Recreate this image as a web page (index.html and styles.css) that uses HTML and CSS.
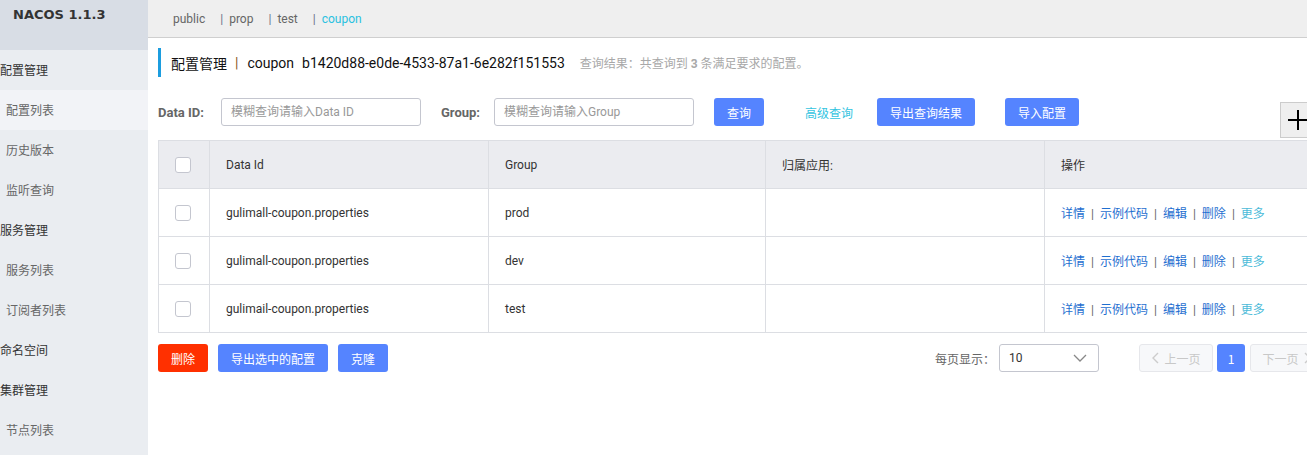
FILE: index.html
```html
<!DOCTYPE html>
<html lang="zh-CN">
<head>
<meta charset="utf-8">
<title>Nacos 配置管理</title>
<link rel="stylesheet" href="styles.css">
</head>
<body>
<div class="app">
  <aside class="sidebar">
    <div class="brand">NACOS 1.1.3</div>
    <ul class="menu">
      <li class="menu-group">配置管理</li>
      <li class="menu-item active">配置列表</li>
      <li class="menu-item">历史版本</li>
      <li class="menu-item">监听查询</li>
      <li class="menu-group">服务管理</li>
      <li class="menu-item">服务列表</li>
      <li class="menu-item">订阅者列表</li>
      <li class="menu-group">命名空间</li>
      <li class="menu-group">集群管理</li>
      <li class="menu-item">节点列表</li>
    </ul>
  </aside>
  <main class="main">
    <div class="ns-bar">
      <span class="ns">public</span>
      <span class="ns"><span class="ns-sep">|</span>prop</span>
      <span class="ns"><span class="ns-sep">|</span>test</span>
      <span class="ns ns-active"><span class="ns-sep">|</span>coupon</span>
    </div>
    <div class="content">
      <div class="title">
        <span class="title-main">配置管理</span>
        <span class="title-sep">|</span>
        <span class="title-main">coupon</span>
        <span class="title-main title-id">b1420d88-e0de-4533-87a1-6e282f151553</span>
        <span class="title-result">查询结果：共查询到 <b>3</b> 条满足要求的配置。</span>
      </div>
      <div class="search">
        <label class="lbl">Data ID:</label>
        <div class="input">模糊查询请输入Data ID</div>
        <label class="lbl lbl-group">Group:</label>
        <div class="input">模糊查询请输入Group</div>
        <button class="btn btn-query">查询</button>
        <span class="adv">高级查询</span>
        <button class="btn btn-export">导出查询结果</button>
        <button class="btn btn-import">导入配置</button>
      </div>
      <table class="grid">
        <colgroup>
          <col class="c-chk"><col class="c-id"><col class="c-group"><col class="c-app"><col class="c-op">
        </colgroup>
        <thead>
          <tr>
            <th class="chk-cell"><span class="chk"></span></th>
            <th>Data Id</th>
            <th>Group</th>
            <th>归属应用:</th>
            <th>操作</th>
          </tr>
        </thead>
        <tbody>
          <tr>
            <td class="chk-cell"><span class="chk"></span></td>
            <td>gulimall-coupon.properties</td>
            <td>prod</td>
            <td></td>
            <td class="ops"><a>详情</a><span class="sep">|</span><a>示例代码</a><span class="sep">|</span><a>编辑</a><span class="sep">|</span><a>删除</a><span class="sep">|</span><a class="more">更多</a></td>
          </tr>
          <tr>
            <td class="chk-cell"><span class="chk"></span></td>
            <td>gulimall-coupon.properties</td>
            <td>dev</td>
            <td></td>
            <td class="ops"><a>详情</a><span class="sep">|</span><a>示例代码</a><span class="sep">|</span><a>编辑</a><span class="sep">|</span><a>删除</a><span class="sep">|</span><a class="more">更多</a></td>
          </tr>
          <tr>
            <td class="chk-cell"><span class="chk"></span></td>
            <td>gulimail-coupon.properties</td>
            <td>test</td>
            <td></td>
            <td class="ops"><a>详情</a><span class="sep">|</span><a>示例代码</a><span class="sep">|</span><a>编辑</a><span class="sep">|</span><a>删除</a><span class="sep">|</span><a class="more">更多</a></td>
          </tr>
        </tbody>
      </table>
      <div class="footer">
        <div class="batch">
          <button class="btn btn-del">删除</button>
          <button class="btn btn-expsel">导出选中的配置</button>
          <button class="btn btn-clone">克隆</button>
        </div>
        <div class="pager">
          <span class="pager-lbl">每页显示：</span>
          <div class="select"><span>10</span>
            <svg class="chev" width="14" height="8" viewBox="0 0 14 8"><path d="M1 1 L7 7 L13 1" fill="none" stroke="#888" stroke-width="1.3"/></svg>
          </div>
          <button class="pg pg-prev"><svg width="8" height="12" viewBox="0 0 8 12"><path d="M7 1 L2 6 L7 11" fill="none" stroke="#ccc" stroke-width="1.4"/></svg>上一页</button>
          <button class="pg pg-cur">1</button>
          <button class="pg pg-next">下一页<svg width="8" height="12" viewBox="0 0 8 12"><path d="M1 1 L6 6 L1 11" fill="none" stroke="#ccc" stroke-width="1.4"/></svg></button>
        </div>
      </div>
    </div>
    <div class="add-box"><svg width="22" height="22" viewBox="0 0 22 22"><path d="M11 1 V21 M1 11 H21" stroke="#000" stroke-width="2"/></svg></div>
  </main>
</div>
</body>
</html>
```

FILE: styles.css
```css
* { box-sizing: border-box; }
html, body {
  margin: 0;
  padding: 0;
  width: 1307px;
  height: 455px;
  overflow: hidden;
  background: #fff;
  font-family: Roboto, "Noto Sans CJK SC", sans-serif;
  font-size: 12px;
  color: #333;
}
.app {
  display: flex;
  height: 455px;
}
.sidebar {
  width: 148px;
  flex: none;
  background: #eaedf1;
  overflow: hidden;
}
.brand {
  height: 50px;
  background: #d8dde5;
  padding: 7px 0 0 13px;
  font-family: "DejaVu Sans", sans-serif;
  font-weight: bold;
  font-size: 13px;
  color: #333;
}
.menu {
  list-style: none;
  margin: 0;
  padding: 0;
}
.menu li {
  height: 40px;
  line-height: 40px;
  white-space: nowrap;
  font-family: "Noto Sans CJK SC", sans-serif;
  font-size: 12px;
}
.menu-group {
  padding-left: 0;
  color: #333;
}
.menu-item {
  padding-left: 6px;
  color: #666;
}
.menu-item.active {
  background: #f2f3f7;
}
.main {
  flex: 1;
  min-width: 0;
  position: relative;
  overflow: hidden;
}
.ns-bar {
  height: 38px;
  background: #efefef;
  border-bottom: 1px solid #cfcfcf;
  padding-left: 25px;
  display: flex;
  align-items: center;
  white-space: nowrap;
  font-size: 12px;
  color: #666;
}
.ns { margin-right: 15px; }
.ns-sep { margin-right: 6px; color: #6a6f8a; }
.ns-active { color: #2ac1e0; }
.content {
  padding-left: 10px;
}
.title {
  margin-top: 10px;
  height: 29px;
  border-left: 3px solid #1c9ddf;
  padding-left: 10px;
  display: flex;
  align-items: center;
  white-space: nowrap;
}
.title-main {
  font-size: 14px;
  color: #111;
}
.title-sep {
  font-size: 14px;
  color: #8b5a1e;
  margin: 0 9px 0 8px;
}
.title-id { margin-left: 8px; }
.title-result {
  margin-left: 15px;
  font-size: 12px;
  color: #a8a8a8;
}
.title-result b { font-weight: bold; }
.search {
  margin-top: 21px;
  height: 28px;
  display: flex;
  align-items: center;
  white-space: nowrap;
}
.lbl {
  font-weight: bold;
  font-size: 13px;
  color: #666;
  width: 63px;
}
.lbl-group { margin-left: 20px; width: 53px; }
.input {
  width: 200px;
  height: 28px;
  border: 1px solid #c4c6cf;
  border-radius: 3px;
  padding-left: 9px;
  line-height: 26px;
  color: #999;
  font-size: 12px;
}
.btn {
  height: 28px;
  border: none;
  border-radius: 3px;
  background: #5584ff;
  color: #fff;
  font-family: "Noto Sans CJK SC", sans-serif;
  font-size: 12px;
  padding: 0;
  cursor: pointer;
}
.btn-query { width: 50px; margin-left: 20px; }
.adv {
  color: #33c4df;
  font-family: "Noto Sans CJK SC", sans-serif;
  margin-left: 41px;
  width: 72px;
}
.btn-export { width: 98px; }
.btn-import { width: 74px; margin-left: 30px; }
.grid {
  margin-top: 14px;
  border-collapse: collapse;
  table-layout: fixed;
  width: 1165px;
}
.c-chk { width: 51px; }
.c-id { width: 279px; }
.c-group { width: 277px; }
.c-app { width: 279px; }
.c-op { width: 279px; }
.grid th, .grid td {
  height: 48px;
  border: 1px solid #dcdee3;
  padding: 0 16px;
  text-align: left;
  font-weight: normal;
  font-size: 12px;
  color: #333;
  white-space: nowrap;
}
.grid th { background: #ebecf0; }
.grid .chk-cell { padding: 0 0 0 16px; }
.chk {
  display: block;
  width: 16px;
  height: 16px;
  border: 1px solid #c4c6cf;
  border-radius: 3px;
  background: #fff;
}
.ops a { color: #1f6fd0; }
.ops a.more { color: #4cbbd9; }
.ops .sep { color: #666; margin: 0 6px; }
.footer {
  margin-top: 11px;
  display: flex;
  align-items: center;
  height: 28px;
}
.batch {
  display: flex;
  gap: 10px;
}
.btn-del { width: 50px; background: #ff3000; }
.btn-expsel { width: 110px; }
.btn-clone { width: 50px; }
.pager {
  margin-left: 547px;
  display: flex;
  align-items: center;
  white-space: nowrap;
}
.pager-lbl { color: #666; width: 64px; }
.select {
  width: 100px;
  height: 28px;
  border: 1px solid #c4c6cf;
  border-radius: 3px;
  display: flex;
  align-items: center;
  justify-content: space-between;
  padding: 0 11px 0 9px;
  color: #333;
  margin-right: 40px;
}
.pg {
  height: 28px;
  border-radius: 3px;
  font-family: "Noto Sans CJK SC", sans-serif;
  font-size: 12px;
  padding: 0;
  display: flex;
  align-items: center;
  justify-content: center;
  gap: 5px;
}
.pg-prev, .pg-next {
  width: 74px;
  background: #f7f8fa;
  border: 1px solid #e6e7eb;
  color: #c8c8c8;
}
.pg-cur {
  width: 28px;
  margin: 0 5px 0 4px;
  background: #5584ff;
  border: none;
  color: #fff;
}
.add-box {
  position: absolute;
  left: 1132px;
  top: 102px;
  width: 36px;
  height: 36px;
  background: #efefef;
  border: 1px solid #ccc;
  display: flex;
  align-items: center;
  padding-left: 6px;
}
```
